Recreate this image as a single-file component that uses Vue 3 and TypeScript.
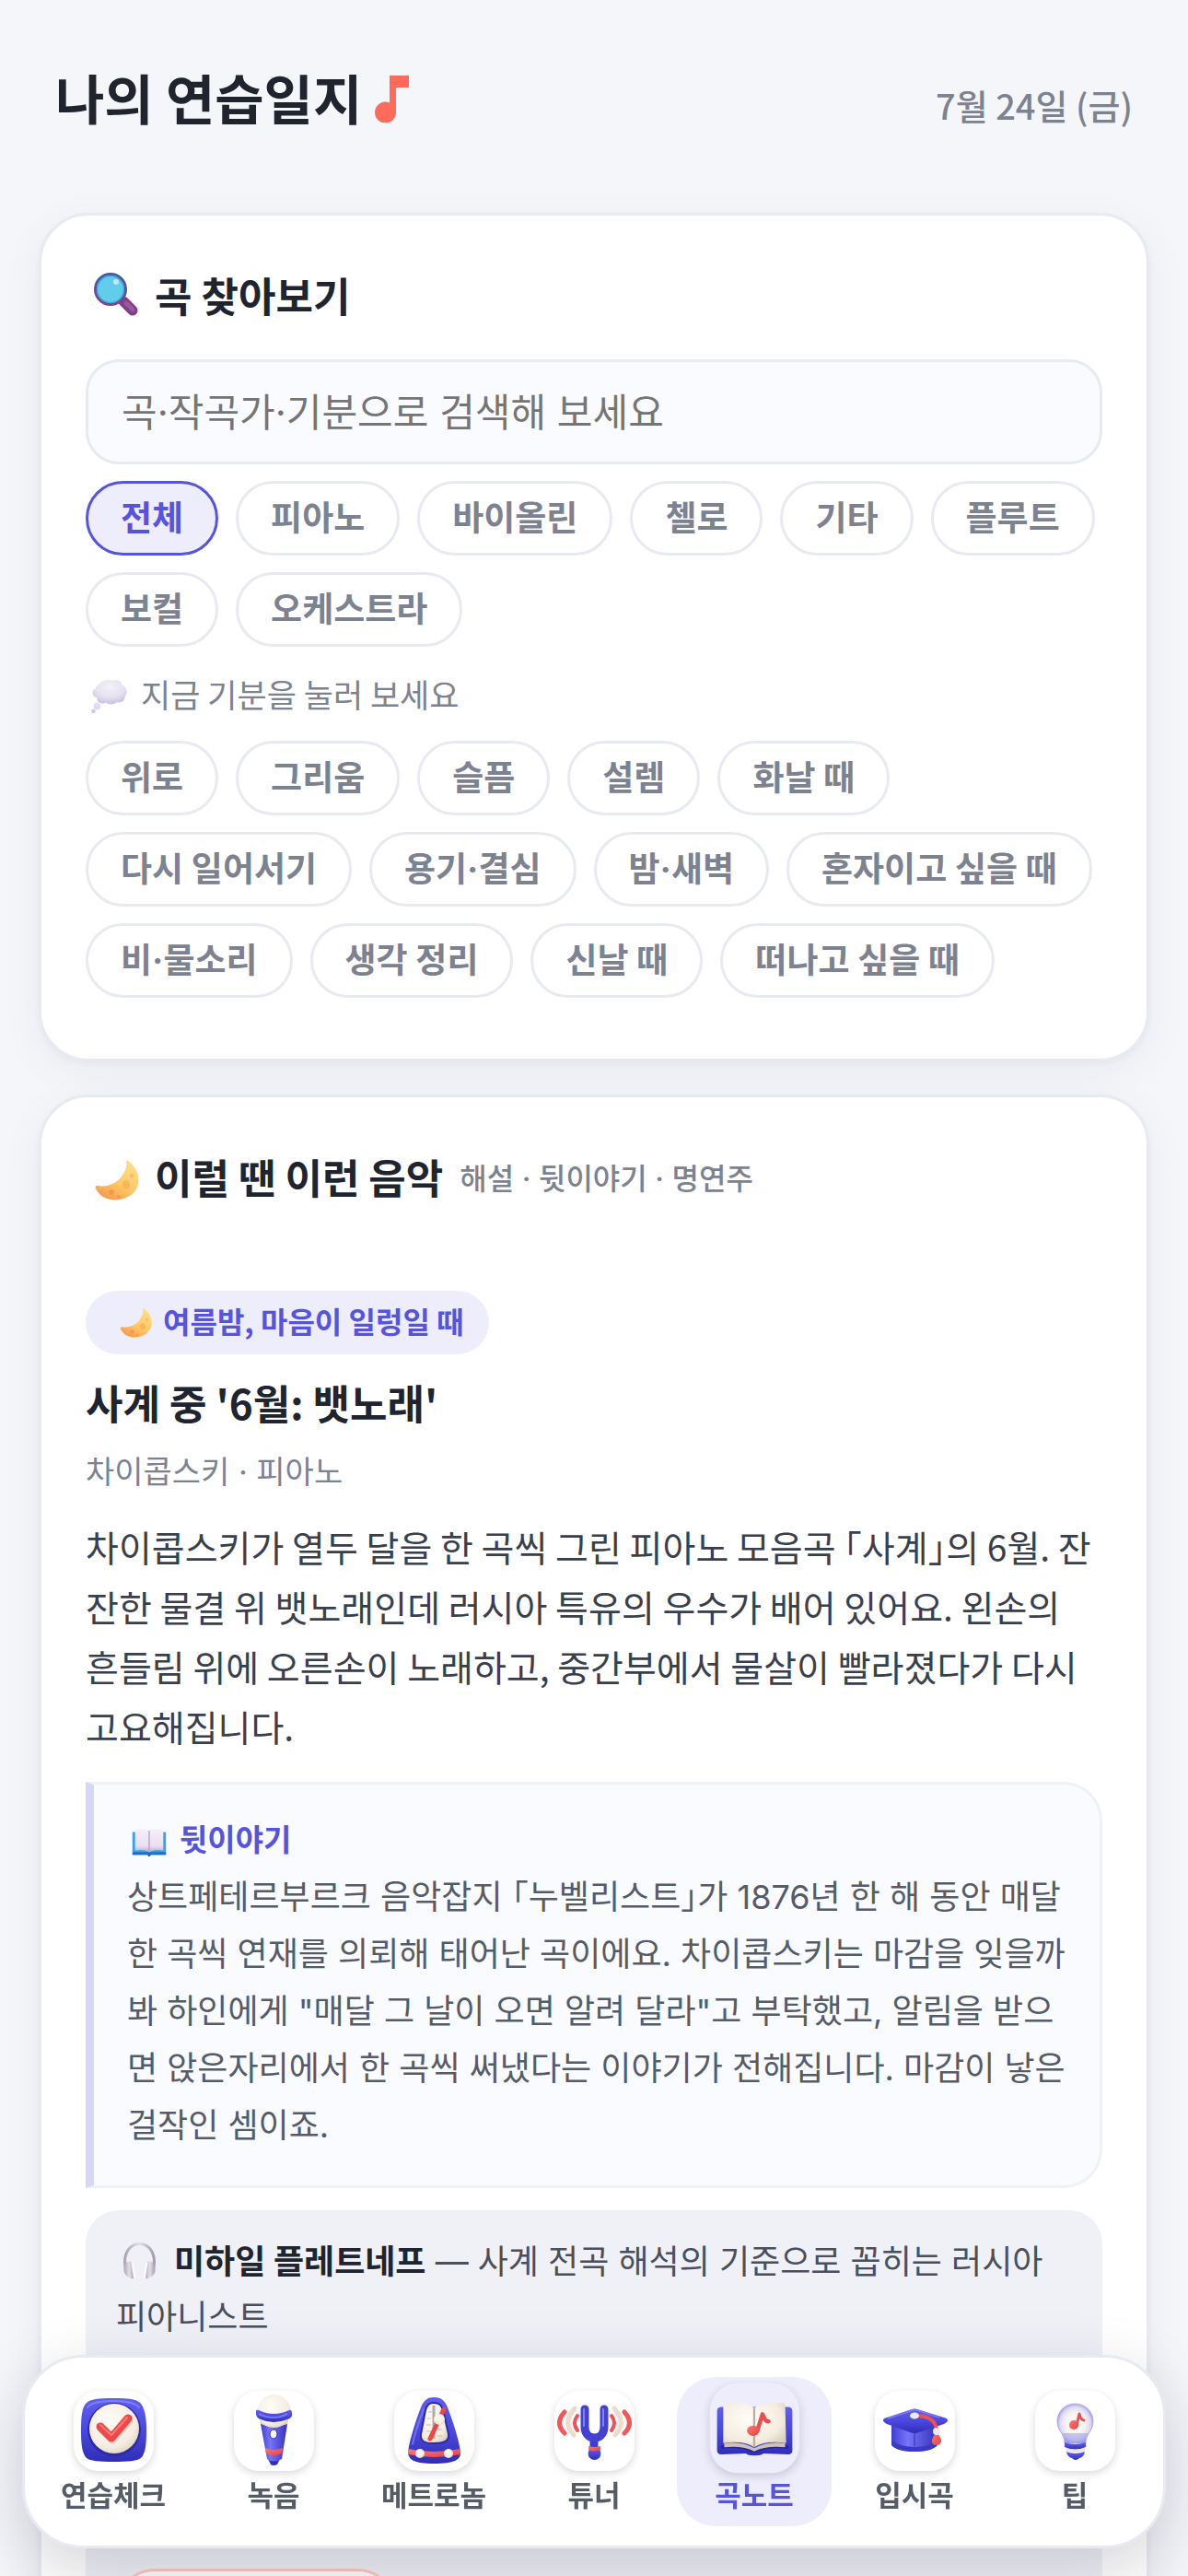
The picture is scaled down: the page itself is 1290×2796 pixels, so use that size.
<script setup lang="ts">
import { ref } from 'vue'

interface Tab {
  id: string
  label: string
}

const instruments: string[] = ['전체', '피아노', '바이올린', '첼로', '기타', '플루트', '보컬', '오케스트라']
const moods: string[] = [
  '위로', '그리움', '슬픔', '설렘', '화날 때',
  '다시 일어서기', '용기·결심', '밤·새벽', '혼자이고 싶을 때',
  '비·물소리', '생각 정리', '신날 때', '떠나고 싶을 때',
]
const tabs: Tab[] = [
  { id: 'check', label: '연습체크' },
  { id: 'mic', label: '녹음' },
  { id: 'metronome', label: '메트로놈' },
  { id: 'tuner', label: '튜너' },
  { id: 'book', label: '곡노트' },
  { id: 'cap', label: '입시곡' },
  { id: 'bulb', label: '팁' },
]

const query = ref('')
const instrument = ref('전체')
const mood = ref('')
const activeTab = ref('book')
</script>

<template>
  <div class="page">
    <svg class="defs" aria-hidden="true">
      <defs>
        <linearGradient id="blue" x1="0" y1="0" x2="0" y2="1">
          <stop offset="0" stop-color="#5f5ff0" />
          <stop offset="0.5" stop-color="#4a48e0" />
          <stop offset="1" stop-color="#2f2eb4" />
        </linearGradient>
        <linearGradient id="blueSide" x1="0" y1="0" x2="1" y2="0">
          <stop offset="0" stop-color="#3f3dd0" />
          <stop offset="0.35" stop-color="#7674f8" />
          <stop offset="1" stop-color="#3432bd" />
        </linearGradient>
        <linearGradient id="red" x1="0" y1="0" x2="1" y2="1">
          <stop offset="0" stop-color="#ff7a70" />
          <stop offset="1" stop-color="#e93f43" />
        </linearGradient>
        <radialGradient id="cream" cx="0.4" cy="0.35" r="0.75">
          <stop offset="0" stop-color="#fffdf8" />
          <stop offset="0.7" stop-color="#f4ecdf" />
          <stop offset="1" stop-color="#d8cdbf" />
        </radialGradient>
        <radialGradient id="glass" cx="0.5" cy="0.5" r="0.5">
          <stop offset="0" stop-color="#ffffff" />
          <stop offset="0.6" stop-color="#f6f1ee" />
          <stop offset="0.85" stop-color="#dcd8f4" />
          <stop offset="1" stop-color="#a7a4ea" />
        </radialGradient>
        <linearGradient id="moonFill" x1="0.9" y1="0" x2="0.3" y2="1">
          <stop offset="0" stop-color="#ffe08a" />
          <stop offset="0.6" stop-color="#ffc966" />
          <stop offset="1" stop-color="#f79a4c" />
        </linearGradient>
        <linearGradient id="rim" x1="0" y1="0" x2="0" y2="1">
          <stop offset="0" stop-color="#3f5f9c" />
          <stop offset="1" stop-color="#7c4288" />
        </linearGradient>
        <radialGradient id="cloud" cx="0.5" cy="0.3" r="0.7">
          <stop offset="0" stop-color="#f4f1f8" />
          <stop offset="0.6" stop-color="#e6e1f0" />
          <stop offset="1" stop-color="#c9bfe2" />
        </radialGradient>
        <linearGradient id="paper" x1="0" y1="0" x2="0" y2="1">
          <stop offset="0" stop-color="#f6eff8" />
          <stop offset="0.75" stop-color="#eadff0" />
          <stop offset="1" stop-color="#b9a9cc" />
        </linearGradient>
        <linearGradient id="silver" x1="0" y1="0" x2="1" y2="0">
          <stop offset="0" stop-color="#aba3b1" />
          <stop offset="0.5" stop-color="#e3dfe8" />
          <stop offset="1" stop-color="#a39aab" />
        </linearGradient>
      </defs>

      <symbol id="emoji-search" viewBox="0 0 66 66">
        <path d="M41 40 L51 50" stroke="#7f3f86" stroke-width="11" stroke-linecap="round" />
        <path d="M44 42 L51 49" stroke="#98589c" stroke-width="5" stroke-linecap="round" />
        <circle cx="27" cy="27" r="16.5" fill="#62cdea" stroke="url(#rim)" stroke-width="3" />
        <circle cx="27" cy="27" r="14.5" fill="none" stroke="#3ea6e2" stroke-width="1.5" />
        <circle cx="33" cy="19" r="3" fill="#c8e4fa" />
      </symbol>
      <symbol id="emoji-moon" viewBox="0 0 66 66">
        <g transform="translate(0 4)">
          <path d="M45 11 C61 22 62 43 46 51 C33 58 16 54 11 42 C10 40 11 39 13 39 C25 41 36 35 41 26 C44 21 45 16 44 12 Z" fill="url(#moonFill)" />
          <ellipse cx="44" cy="38" rx="4" ry="5" fill="#f3a953" opacity="0.6" />
          <circle cx="28" cy="46" r="3" fill="#ec8e45" opacity="0.6" />
          <circle cx="50" cy="28" r="2" fill="#f3a953" opacity="0.6" />
          <circle cx="36" cy="51" r="2" fill="#ec8e45" opacity="0.5" />
        </g>
      </symbol>
      <symbol id="emoji-thought" viewBox="0 0 66 66">
        <g transform="translate(0 4)">
          <path d="M20 14 C24 8 34 8 37 10 C44 7 51 10 51 16 C58 18 60 28 55 32 C56 38 49 42 44 40 C40 44 32 44 29 41 C22 44 15 40 16 34 C8 32 8 23 14 21 C14 18 17 15 20 14 Z" fill="url(#cloud)" />
          <circle cx="16" cy="46" r="5" fill="#e3dcf0" />
          <circle cx="11" cy="53" r="3" fill="#d3c9ea" />
        </g>
      </symbol>
      <symbol id="emoji-book" viewBox="0 0 66 66">
        <g transform="translate(0 4)">
          <path d="M8 20 H58 V54 H36 L33 57 L30 54 H8 Z" fill="#3aa3e8" />
          <path d="M8 50 H58 V54 H36 L33 57 L30 54 H8 Z" fill="#1f6fc4" />
          <path d="M12 17 Q24 13 33 18 Q42 13 54 17 V48 Q42 45 33 50 Q24 45 12 48 Z" fill="url(#paper)" />
          <path d="M33 18 V50" stroke="#b6a5ca" stroke-width="2" />
        </g>
      </symbol>
      <symbol id="emoji-headphones" viewBox="0 0 66 66">
        <path d="M13 44 C6 0 60 0 53 44" fill="none" stroke="url(#silver)" stroke-width="4" />
        <path d="M16 36 Q24 34 24 42 L26 56 Q26 60 22 60 Q10 56 11 46 Q11 40 16 36 Z" fill="url(#silver)" />
        <path d="M50 36 Q42 34 42 42 L40 56 Q40 60 44 60 Q56 56 55 46 Q55 40 50 36 Z" fill="url(#silver)" />
        <path d="M23 38 L26 58 M43 38 L40 58" stroke="#fbf9fd" stroke-width="3" stroke-linecap="round" />
      </symbol>

      <symbol id="tab-check" viewBox="0 0 87 87">
        <path d="M43 8 C60 8 68 9 72 13 C77 18 79 28 79 43 C79 58 78 68 73 73 C69 76 60 77 43 77 C27 77 18 76 14 73 C9 68 8 58 8 43 C8 27 9 18 14 13 C18 9 27 8 43 8 Z" fill="url(#blue)" />
        <path d="M15 18 Q20 11 43 11 Q66 11 71 18" fill="none" stroke="#8f90f8" stroke-width="2" stroke-linecap="round" opacity="0.7" />
        <circle cx="44" cy="42" r="29" fill="#2c2aa5" />
        <circle cx="44" cy="41" r="27" fill="url(#cream)" />
        <path d="M30 41 L42 53 L60 32" fill="none" stroke="#c9b7a8" stroke-width="9" stroke-linecap="round" stroke-linejoin="round" opacity="0.5" />
        <path d="M29 39 L41 51 L59 30" fill="none" stroke="#f0484a" stroke-width="9" stroke-linecap="round" stroke-linejoin="round" />
        <path d="M29 37 L41 48 L58 29" fill="none" stroke="#ff7d72" stroke-width="2" stroke-linecap="round" />
      </symbol>
      <symbol id="tab-mic" viewBox="0 0 87 87">
        <path d="M37 74 H50 L47 80 Q43 82 40 80 Z" fill="#2f2eb4" />
        <path d="M29 36 H58 L52 74 Q43 79 36 74 Z" fill="url(#blueSide)" />
        <path d="M34 62 Q43 66 53 62 L52 68 Q43 72 35 68 Z" fill="url(#red)" />
        <path d="M28 32 H59 L58 36 Q43 42 29 36 Z" fill="#d9cfc4" />
        <circle cx="43.5" cy="22" r="18" fill="url(#cream)" />
        <path d="M24 22 Q24 20 27 21 Q43 29 60 21 Q63 20 63 25 Q64 29 58 31 Q43 37 29 31 Q23 29 24 22 Z" fill="url(#blue)" />
        <path d="M27 25 Q43 33 58 25" fill="none" stroke="#8585f6" stroke-width="2" opacity="0.8" />
        <ellipse cx="43" cy="47" rx="4" ry="5" fill="url(#cream)" stroke="#2f2eb4" />
      </symbol>
      <symbol id="tab-metronome" viewBox="0 0 87 87">
        <path d="M43 7 C50 7 55 10 58 18 C64 34 70 52 72 66 C73 75 65 79 43 79 C22 79 15 75 15 66 C17 52 23 34 29 18 C32 10 37 7 43 7 Z" fill="url(#blue)" />
        <path d="M32 20 Q24 40 20 58" stroke="#8585f6" stroke-width="2" stroke-linecap="round" fill="none" opacity="0.7" />
        <path d="M43 13 C49 13 51 15 53 21 L59 47 C60 55 54 57 43 57 C33 57 28 55 29 47 L34 21 C36 15 38 13 43 13 Z" fill="url(#cream)" stroke="#2c2aa5" stroke-width="2" />
        <path d="M43 16 V52" stroke="#b5aaa0" stroke-width="3" />
        <path d="M37 23 H41 M36 30 H40 M35 37 H40 M35 44 H40 M47 42 H52 M47 49 H52" stroke="#d0b9aa" stroke-width="1" />
        <path d="M39 52 L54 20" stroke="#e94748" stroke-width="5" stroke-linecap="round" />
        <circle cx="49" cy="31" r="6" fill="url(#cream)" />
        <path d="M15 63 Q43 69 72 63 V69 Q43 75 15 69 Z" fill="url(#red)" />
        <circle cx="28" cy="68" r="5" fill="url(#cream)" />
        <circle cx="59" cy="68" r="5" fill="url(#cream)" />
      </symbol>
      <symbol id="tab-tuner" viewBox="0 0 87 87">
        <g fill="none" stroke-linecap="round">
          <path d="M11 23 Q0 35 11 46 M76 23 Q87 35 76 46" stroke="#f4575a" stroke-width="5" />
          <path d="M22 19 Q8 35 21 48 M65 19 Q79 35 66 48" stroke="#ecdccd" stroke-width="5" />
          <path d="M25 27 Q19 35 25 43 M62 27 Q68 35 62 43" stroke="#ef5256" stroke-width="4" />
          <path d="M43 52 V62" stroke="#3e3cce" stroke-width="9" />
          <path d="M33 20 V39 C33 55 54 55 54 39 V20" stroke="#4340d4" stroke-width="9" />
          <path d="M32 20 V38 M53 20 V38" stroke="#8482fa" stroke-width="2" />
        </g>
        <circle cx="43.5" cy="68" r="7" fill="url(#blue)" />
        <path d="M37 60 Q43 62 50 60 V64 Q43 67 37 64 Z" fill="url(#red)" />
      </symbol>
      <symbol id="tab-book" viewBox="0 0 87 87">
        <path d="M7 27 Q7 23 12 23 H75 Q80 23 80 27 V65 Q80 69 76 69 L52 68 Q50 70 43 70 Q37 70 35 68 L11 69 Q7 69 7 65 Z" fill="url(#blue)" />
        <path d="M11 62 Q28 59 43 66 Q58 59 76 62" stroke="#2523a0" stroke-width="3" fill="none" />
        <path d="M14 58 Q32 56 43 63 Q55 56 73 58 V62 Q55 60 43 66 Q32 60 14 62 Z" fill="#cfc2b4" />
        <path d="M13 21 Q14 19 19 19 Q36 18 43 24 Q51 18 68 19 Q73 19 73 21 L74 58 Q55 55 43 62 Q32 55 13 58 Z" fill="url(#cream)" />
        <path d="M43 24 V62" stroke="#bcae9f" stroke-width="2" />
        <path d="M46 46 L51 30 Q54 38 57 37" fill="none" stroke="#ef4c4d" stroke-width="4" stroke-linecap="round" stroke-linejoin="round" />
        <ellipse cx="42" cy="46" rx="6" ry="5" fill="url(#red)" />
      </symbol>
      <symbol id="tab-cap" viewBox="0 0 87 87">
        <path d="M18 38 H68 V58 Q62 66 43 66 Q24 66 18 58 Z" fill="url(#blueSide)" />
        <path d="M18 54 Q28 61 43 61 Q60 61 68 54 V59 Q62 66 43 66 Q24 66 18 59 Z" fill="#3a38c6" />
        <path d="M43 44 V60" stroke="#2f2db0" stroke-width="1" />
        <path d="M9 32 Q9 30 13 29 L40 20 Q43 19 46 20 L75 29 Q79 30 79 32 Q79 34 75 36 L48 45 Q43 47 38 45 L13 36 Q9 34 9 32 Z" fill="url(#blue)" />
        <path d="M14 30 L41 21 Q43 20 46 21 L70 29" fill="none" stroke="#8584fa" stroke-width="2" opacity="0.7" />
        <path d="M44 27 Q66 27 67 43" fill="none" stroke="#ef5053" stroke-width="4" stroke-linecap="round" />
        <ellipse cx="43" cy="27" rx="5" ry="3.5" fill="#ece9f2" />
        <path d="M67 45 Q72 50 72 55 Q71 59 67 59 Q62 59 62 55 Q62 50 67 45 Z" fill="url(#red)" />
        <circle cx="67" cy="44" r="4" fill="#efe9ee" />
      </symbol>
      <symbol id="tab-bulb" viewBox="0 0 87 87">
        <path d="M43 14 C55 14 63 23 63 33 C63 44 55 46 55 57 H32 C32 46 24 44 24 33 C24 23 32 14 43 14 Z" fill="url(#glass)" stroke="#b3b0ec" stroke-width="1" />
        <path d="M29 46 Q33 51 33 57 H54 Q54 51 58 46" fill="#8f8be8" opacity="0.45" />
        <path d="M32 56 Q43 60 55 56 V61 Q43 66 32 61 Z" fill="url(#blue)" />
        <path d="M34 62 Q43 66 54 62 V65 Q43 69 34 65 Z" fill="#e8e4ee" />
        <path d="M34 66 Q43 70 54 66 Q53 72 48 73 Q44 77 40 73 Q35 72 34 66 Z" fill="url(#blue)" />
        <path d="M45 37 L48 25 Q49 31 53 32" fill="none" stroke="#ee4e50" stroke-width="3" stroke-linecap="round" stroke-linejoin="round" />
        <circle cx="42" cy="37" r="5" fill="url(#red)" />
      </symbol>
    </svg>

    <header class="top">
      <h1>
        나의 연습일지
        <svg class="note" viewBox="0 0 37 51" aria-hidden="true">
          <path d="M16 0H37V13H23V39.500A11.500 11.500 0 1 1 16 29.500Z" fill="#ff6b5b" />
        </svg>
      </h1>
      <time datetime="2026-07-24">7월 24일 (금)</time>
    </header>

    <main class="cards">
      <section class="card">
        <h2>
          <svg class="emoji emoji-lg" aria-hidden="true"><use href="#emoji-search" /></svg>
          <span>곡 찾아보기</span>
        </h2>
        <input v-model="query" class="search" type="search" aria-label="곡 검색" placeholder="곡·작곡가·기분으로 검색해 보세요">
        <div class="chips">
          <button
            v-for="name in instruments"
            :key="name"
            type="button"
            class="chip"
            :class="{ selected: instrument === name }"
            @click="instrument = name"
          >{{ name }}</button>
        </div>
        <p class="hint">
          <svg class="emoji emoji-md" aria-hidden="true"><use href="#emoji-thought" /></svg>
          <span>지금 기분을 눌러 보세요</span>
        </p>
        <div class="chips">
          <button
            v-for="name in moods"
            :key="name"
            type="button"
            class="chip"
            :class="{ selected: mood === name }"
            @click="mood = name"
          >{{ name }}</button>
        </div>
      </section>

      <section class="card">
        <h2>
          <svg class="emoji emoji-lg" aria-hidden="true"><use href="#emoji-moon" /></svg>
          <span>이럴 땐 이런 음악</span>
          <small>해설 · 뒷이야기 · 명연주</small>
        </h2>
        <div class="theme">
          <svg class="emoji emoji-sm" aria-hidden="true"><use href="#emoji-moon" /></svg>
          <span>여름밤, 마음이 일렁일 때</span>
        </div>
        <h3>사계 중 '6월: 뱃노래'</h3>
        <p class="composer">차이콥스키 · 피아노</p>
        <p class="desc">차이콥스키가 열두 달을 한 곡씩 그린 피아노 모음곡 「사계」의 6월. 잔잔한 물결 위 뱃노래인데 러시아 특유의 우수가 배어 있어요. 왼손의 흔들림 위에 오른손이 노래하고, 중간부에서 물살이 빨라졌다가 다시 고요해집니다.</p>
        <blockquote class="story">
          <h4>
            <svg class="emoji emoji-sm" aria-hidden="true"><use href="#emoji-book" /></svg>
            <span>뒷이야기</span>
          </h4>
          <p>상트페테르부르크 음악잡지 「누벨리스트」가 1876년 한 해 동안 매달 한 곡씩 연재를 의뢰해 태어난 곡이에요. 차이콥스키는 마감을 잊을까봐 하인에게 "매달 그 날이 오면 알려 달라"고 부탁했고, 알림을 받으면 앉은자리에서 한 곡씩 써냈다는 이야기가 전해집니다. 마감이 낳은 걸작인 셈이죠.</p>
        </blockquote>
        <div class="listen">
          <p><svg class="emoji emoji-md" aria-hidden="true"><use href="#emoji-headphones" /></svg><strong>미하일 플레트네프</strong> — 사계 전곡 해석의 기준으로 꼽히는 러시아 피아니스트</p>
          <button type="button" class="play" aria-label="연주 듣기"></button>
        </div>
      </section>
    </main>

    <nav class="tabs" aria-label="메뉴">
      <button
        v-for="tab in tabs"
        :key="tab.id"
        type="button"
        class="tab"
        :class="{ active: tab.id === activeTab }"
        @click="activeTab = tab.id"
      >
        <span class="tile"><svg aria-hidden="true"><use :href="'#tab-' + tab.id" /></svg></span>
        <span>{{ tab.label }}</span>
      </button>
    </nav>
  </div>
</template>

<style>
body {
  margin: 0;
  background: #f5f6fa;
}
</style>

<style scoped>
.page {
  box-sizing: border-box;
  height: 100vh;
  overflow: hidden;
  padding: 63px 42px 0;
  background: #f5f6fa;
  color: #20242f;
  font-family: "Noto Sans CJK KR", "Noto Sans", sans-serif;
}

.page h1,
.page h2,
.page h3,
.page h4,
.page p,
.page blockquote {
  margin: 0;
}

.page button,
.page input {
  box-sizing: border-box;
  margin: 0;
  font-family: Inter, "Noto Sans CJK KR", sans-serif;
}

.defs {
  position: absolute;
  width: 0;
  height: 0;
}

.top {
  display: flex;
  justify-content: space-between;
  align-items: baseline;
  padding: 0 18px;
  margin-bottom: 84px;
}

.top h1 {
  font-size: 58px;
  line-height: 84px;
  font-weight: 700;
}

.note {
  width: 37px;
  height: 51px;
  vertical-align: -3px;
}

.top time {
  color: #7d8291;
  font-size: 38px;
  font-weight: 500;
}

.cards {
  display: flex;
  flex-direction: column;
  gap: 36px;
}

.card {
  padding: 56px 48px 66px;
  border: 3px solid #e8eaf2;
  border-radius: 54px;
  background: #fff;
  box-shadow: 0 3px 6px rgba(30, 35, 60, 0.04), 0 12px 48px rgba(30, 35, 60, 0.05);
}

.card h2 {
  display: flex;
  align-items: center;
  gap: 9px;
  height: 60px;
  font-size: 44px;
  line-height: 60px;
  font-weight: 700;
}

.card h2 small {
  margin-left: 9px;
  padding-top: 5px;
  color: #7d8291;
  font-family: Inter, "Noto Sans CJK KR", sans-serif;
  font-size: 32px;
  font-weight: 500;
}

.emoji {
  flex: none;
}

.emoji-lg {
  width: 66px;
  height: 66px;
}

.emoji-md {
  width: 51px;
  height: 51px;
}

.emoji-sm {
  width: 48px;
  height: 48px;
}

.page .search {
  display: block;
  width: 100%;
  height: 114px;
  margin-top: 40px;
  margin-bottom: 18px;
  padding: 0 36px;
  border: 3px solid #e8eaf2;
  border-radius: 36px;
  background: #fafbfe;
  font-size: 42px;
  outline: none;
  appearance: none;
}

.search::placeholder {
  color: #757575;
  opacity: 1;
}

.chips {
  display: flex;
  flex-wrap: wrap;
  gap: 18px 19px;
}

.page .chip {
  height: 81px;
  padding: 0 35px;
  border: 3px solid #e8eaf2;
  border-radius: 42px;
  background: #fff;
  color: #7d8291;
  font-size: 37px;
  line-height: 54px;
  font-weight: 700;
}

.page .chip.selected {
  border-color: #5654dc;
  background: #eeedfc;
  color: #5654dc;
}

.page .hint {
  display: flex;
  align-items: center;
  gap: 9px;
  padding: 24px 0;
  color: #7d8291;
  font-size: 35px;
  line-height: 54px;
}

.theme {
  display: flex;
  align-items: center;
  gap: 6px;
  box-sizing: border-box;
  width: fit-content;
  height: 69px;
  margin-top: 94px;
  padding: 0 27px 5px 30px;
  border-radius: 36px;
  background: #eeedfc;
  color: #5654dc;
  font-size: 32px;
  font-weight: 700;
}

.page .card h3 {
  margin-top: 22px;
  font-size: 44px;
  line-height: 60px;
  font-weight: 700;
}

.page .composer {
  margin-top: 22px;
  color: #7d8291;
  font-family: Inter, "Noto Sans CJK KR", sans-serif;
  font-size: 34px;
  line-height: 48px;
}

.page .desc {
  margin-top: 24px;
  padding-right: 6px;
  color: #3a3f4d;
  font-size: 39px;
  line-height: 65px;
  font-feature-settings: "halt";
}

.page .story {
  margin-top: 28px;
  padding: 34px 33px 34px 36px;
  border: 3px solid #f0f1f7;
  border-left: 9px solid #d6d6f8;
  border-radius: 0 42px 42px 0;
  background: #fafbfe;
  font-feature-settings: "halt";
}

.story h4 {
  display: flex;
  align-items: center;
  gap: 9px;
  color: #5654dc;
  font-size: 33px;
  line-height: 48px;
  font-weight: 700;
}

.page .story p {
  margin-top: 9px;
  color: #565b68;
  font-family: Inter, "Noto Sans CJK KR", sans-serif;
  font-size: 36px;
  line-height: 62px;
}

.listen {
  margin-top: 24px;
  padding: 26px 48px 48px 33px;
  border-radius: 36px;
  background: #f0f1f7;
  color: #4a4f5c;
  font-family: Inter, "Noto Sans CJK KR", sans-serif;
  font-size: 36px;
  line-height: 60px;
}

.listen .emoji {
  margin-right: 12px;
  vertical-align: -10px;
}

.listen strong {
  color: #20242f;
  font-weight: 700;
}

.page .play {
  display: block;
  width: 304px;
  height: 84px;
  margin-top: 243px;
  border: 3px solid #ffc9c2;
  border-radius: 42px;
  background: #fff;
}

.tabs {
  position: fixed;
  right: 24px;
  bottom: 30px;
  left: 24px;
  display: flex;
  gap: 6px;
  padding: 21px 12px;
  border: 3px solid #e8eaf2;
  border-radius: 66px;
  background: #fff;
  box-shadow: 0 24px 72px rgba(20, 24, 40, 0.18);
}

.page .tab {
  display: flex;
  flex: 1;
  flex-direction: column;
  align-items: center;
  gap: 9px;
  height: 162px;
  padding: 15px 0;
  border: 0;
  border-radius: 42px;
  background: none;
  color: #565b68;
  font-size: 31px;
  line-height: 36px;
  font-weight: 700;
  white-space: nowrap;
}

.tile {
  display: flex;
  flex: none;
  width: 87px;
  height: 87px;
  border-radius: 27px;
  background: #fff;
  box-shadow: 0 3px 9px rgba(20, 24, 40, 0.16);
}

.tile svg {
  width: 87px;
  height: 87px;
}

.page .tab.active {
  background: #eeedfc;
  color: #5654dc;
}

.active .tile {
  transform: translateY(-3px) scale(1.12);
  background: #eeedfc;
}
</style>
